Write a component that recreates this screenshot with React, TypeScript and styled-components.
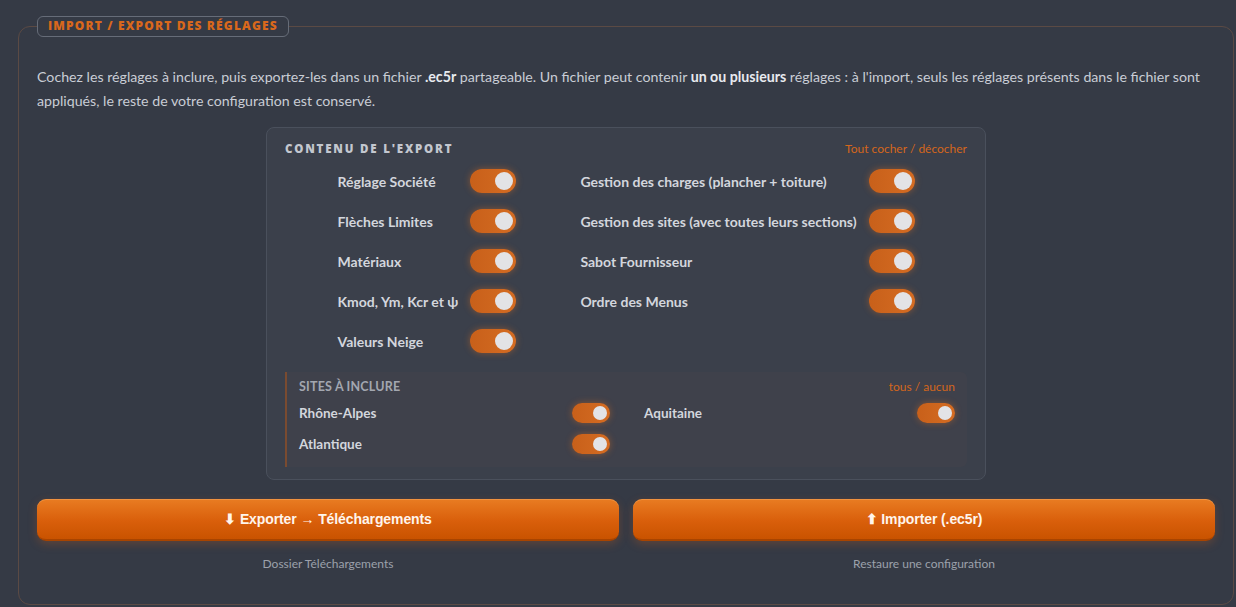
import React, { useState } from "react";
import styled, { createGlobalStyle } from "styled-components";

const Global = createGlobalStyle`
  html, body { margin: 0; padding: 0; background: #353a45; }
  body { font-family: "Lato", "Noto Sans", sans-serif; color: #c9cdd5; }
  * { box-sizing: border-box; }
`;

const Page = styled.div`
  padding: 16px 2px 2px 18px;
  height: 607px;
`;

const Fieldset = styled.fieldset`
  margin: 0;
  height: 589px;
  border: 1px solid #5b4a44;
  border-radius: 12px;
  padding: 28px 18px 0 18px;
  min-width: 0;
`;

const Legend = styled.legend`
  padding: 2px 10px 3px;
  border: 1px solid #666c78;
  border-radius: 6px;
  color: #d9681c;
  font-family: "Open Sans", "Noto Sans", sans-serif;
  font-weight: 800;
  font-size: 12px;
  letter-spacing: 1.15px;
  text-transform: uppercase;
  line-height: 14px;
`;

const Intro = styled.p`
  margin: 0;
  font-size: 14.2px;
  line-height: 24px;
  color: #c9cdd5;
  b { color: #e8eaef; font-weight: 700; }
`;

const Panel = styled.div`
  width: 720px;
  margin: 14px auto 0;
  background: #3b404b;
  border: 1px solid #4a505c;
  border-radius: 8px;
  padding: 12px 18px 12px 18px;
`;

const PanelHead = styled.div<{ $gap: number }>`
  display: flex;
  justify-content: space-between;
  align-items: center;
  height: 16px;
  margin-bottom: ${(p) => p.$gap}px;
`;

const PanelTitle = styled.div`
  font-family: "Open Sans", "Noto Sans", sans-serif;
  font-weight: 800;
  font-size: 11.5px;
  letter-spacing: 1.8px;
  color: #c3c7cf;
  text-transform: uppercase;
`;

const Link = styled.span`
  color: #d4661c;
  font-size: 12px;
  cursor: pointer;
`;

const Columns = styled.div`
  display: flex;
  justify-content: center;
  gap: 64px;
`;

const Column = styled.div`
  display: grid;
  grid-template-columns: auto auto;
  grid-auto-rows: 40px;
  column-gap: 12px;
  align-items: center;
  align-content: start;
`;

const Label = styled.span`
  font-size: 14px;
  font-weight: 700;
  color: #d3d6dd;
  white-space: nowrap;
`;

const Track = styled.button<{ $small?: boolean; $on: boolean }>`
  position: relative;
  width: ${(p) => (p.$small ? 38 : 46)}px;
  height: ${(p) => (p.$small ? 20 : 24)}px;
  border-radius: 999px;
  border: none;
  padding: 0;
  cursor: pointer;
  background: ${(p) => (p.$on ? "linear-gradient(90deg, #c8601a, #d56c22)" : "#596070")};
  box-shadow: ${(p) => (p.$on ? "0 0 7px rgba(226, 110, 30, 0.45)" : "none")};
  &::after {
    content: "";
    position: absolute;
    top: 3px;
    left: ${(p) => (p.$on ? (p.$small ? 21 : 25) : 3)}px;
    width: ${(p) => (p.$small ? 14 : 18)}px;
    height: ${(p) => (p.$small ? 14 : 18)}px;
    border-radius: 50%;
    background: #e3e3e6;
  }
`;

const Sites = styled.div`
  margin-top: 11px;
  background: #3f414b;
  border-left: 2px solid #7a4b30;
  border-radius: 0 6px 6px 0;
  padding: 6px 12px 8px 12px;
`;

const SitesTitle = styled.div`
  font-weight: 700;
  font-size: 12.5px;
  color: #a3a7b0;
  letter-spacing: 0.2px;
  text-transform: uppercase;
`;

const SitesGrid = styled.div`
  display: grid;
  grid-template-columns: 1fr 1fr;
  column-gap: 34px;
  grid-auto-rows: 31px;
`;

const SiteRow = styled.div`
  display: flex;
  align-items: center;
  justify-content: space-between;
`;

const SiteLabel = styled.span`
  font-size: 13.5px;
  font-weight: 700;
  color: #d3d6dd;
`;

const Actions = styled.div`
  display: grid;
  grid-template-columns: 1fr 1fr;
  column-gap: 14px;
  margin-top: 19px;
`;

const ActionCol = styled.div`
  display: flex;
  flex-direction: column;
  align-items: stretch;
`;

const ActionButton = styled.button`
  height: 42px;
  border: none;
  border-radius: 9px;
  border-bottom: 2px solid #a84400;
  background: linear-gradient(180deg, #e97c22 0%, #d95f0b 55%, #c95300 100%);
  box-shadow: 0 3px 10px rgba(230, 100, 20, 0.25), inset 0 1px 0 rgba(255, 190, 120, 0.35);
  color: #fff5ec;
  font-family: "Liberation Sans", Arial, sans-serif;
  font-weight: 700;
  font-size: 14px;
  letter-spacing: -0.1px;
  cursor: pointer;
`;

const Caption = styled.div`
  margin-top: 15px;
  text-align: center;
  font-size: 12px;
  color: #9ca1ab;
`;

const LEFT = ["Réglage Société", "Flèches Limites", "Matériaux", "Kmod, Ym, Kcr et ψ", "Valeurs Neige"];
const RIGHT = [
  "Gestion des charges (plancher + toiture)",
  "Gestion des sites (avec toutes leurs sections)",
  "Sabot Fournisseur",
  "Ordre des Menus",
];
const SITES = ["Rhône-Alpes", "Aquitaine", "Atlantique"];

export default function App() {
  const [on, setOn] = useState<Record<string, boolean>>(() => {
    const o: Record<string, boolean> = {};
    [...LEFT, ...RIGHT, ...SITES].forEach((k) => (o[k] = true));
    return o;
  });
  const flip = (k: string) => setOn((s) => ({ ...s, [k]: !s[k] }));

  const renderCol = (items: string[]) => (
    <Column>
      {items.map((k) => (
        <React.Fragment key={k}>
          <Label>{k}</Label>
          <Track $on={on[k]} onClick={() => flip(k)} aria-label={k} />
        </React.Fragment>
      ))}
    </Column>
  );

  return (
    <>
      <Global />
      <Page>
        <Fieldset>
          <Legend>Import / Export des réglages</Legend>
          <Intro>
            Cochez les réglages à inclure, puis exportez-les dans un fichier <b>.ec5r</b> partageable. Un fichier peut
            contenir <b>un ou plusieurs</b> réglages : à l'import, seuls les réglages présents dans le fichier sont
            appliqués, le reste de votre configuration est conservé.
          </Intro>
          <Panel>
            <PanelHead $gap={5}>
              <PanelTitle>Contenu de l'export</PanelTitle>
              <Link>Tout cocher / décocher</Link>
            </PanelHead>
            <Columns>
              {renderCol(LEFT)}
              {renderCol(RIGHT)}
            </Columns>
            <Sites>
              <PanelHead $gap={3}>
                <SitesTitle>Sites à inclure</SitesTitle>
                <Link>tous / aucun</Link>
              </PanelHead>
              <SitesGrid>
                {SITES.map((k) => (
                  <SiteRow key={k}>
                    <SiteLabel>{k}</SiteLabel>
                    <Track $small $on={on[k]} onClick={() => flip(k)} aria-label={k} />
                  </SiteRow>
                ))}
              </SitesGrid>
            </Sites>
          </Panel>
          <Actions>
            <ActionCol>
              <ActionButton>⬇ Exporter → Téléchargements</ActionButton>
              <Caption>Dossier Téléchargements</Caption>
            </ActionCol>
            <ActionCol>
              <ActionButton>⬆ Importer (.ec5r)</ActionButton>
              <Caption>Restaure une configuration</Caption>
            </ActionCol>
          </Actions>
        </Fieldset>
      </Page>
    </>
  );
}
